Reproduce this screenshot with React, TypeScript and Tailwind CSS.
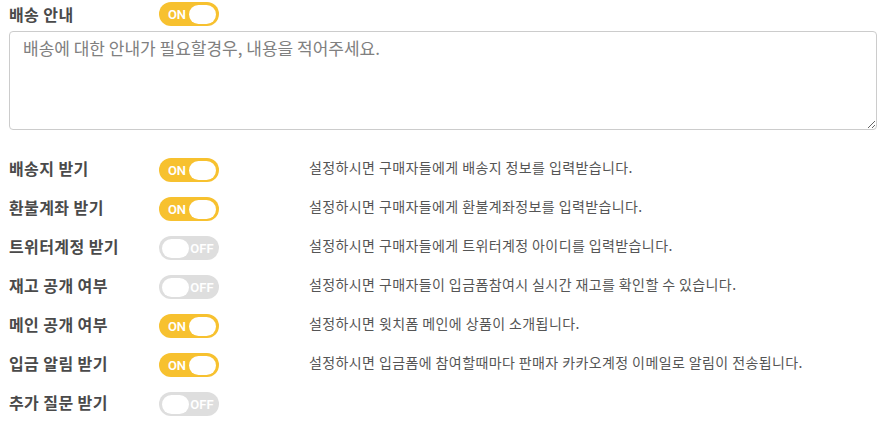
import React, { useState } from 'react'

interface Option {
  key: string
  label: string
  on: boolean
  help?: string
}

const initialOptions: Option[] = [
  { key: 'address', label: '배송지 받기', on: true, help: '설정하시면 구매자들에게 배송지 정보를 입력받습니다.' },
  { key: 'refund', label: '환불계좌 받기', on: true, help: '설정하시면 구매자들에게 환불계좌정보를 입력받습니다.' },
  { key: 'twitter', label: '트위터계정 받기', on: false, help: '설정하시면 구매자들에게 트위터계정 아이디를 입력받습니다.' },
  { key: 'stock', label: '재고 공개 여부', on: false, help: '설정하시면 구매자들이 입금폼참여시 실시간 재고를 확인할 수 있습니다.' },
  { key: 'main', label: '메인 공개 여부', on: true, help: '설정하시면 윗치폼 메인에 상품이 소개됩니다.' },
  { key: 'notify', label: '입금 알림 받기', on: true, help: '설정하시면 입금폼에 참여할때마다 판매자 카카오계정 이메일로 알림이 전송됩니다.' },
  { key: 'question', label: '추가 질문 받기', on: false },
]

function Toggle({ on, onChange, className = '' }: { on: boolean; onChange: () => void; className?: string }) {
  return (
    <button
      type="button"
      onClick={onChange}
      className={`flex items-center w-[60px] h-[24px] rounded-full px-[3px] shrink-0 ${
        on ? 'bg-[#f7c12f] flex-row' : 'bg-[#dedede] flex-row-reverse'
      } ${className}`}
    >
      <span
        className={`flex-1 text-center text-[13px] font-semibold text-white leading-none ${on ? 'pl-[3px]' : 'pr-[1px]'}`}
        style={{ fontFamily: 'Roboto, "Liberation Sans", sans-serif' }}
      >
        {on ? 'ON' : 'OFF'}
      </span>
      <span className="w-[27px] h-[19px] rounded-full bg-white" />
    </button>
  )
}

export default function App() {
  const [shipInfo, setShipInfo] = useState(true)
  const [options, setOptions] = useState(initialOptions)

  const flip = (key: string) =>
    setOptions((prev) => prev.map((o) => (o.key === key ? { ...o, on: !o.on } : o)))

  return (
    <div
      className="w-[885px] h-[422px] bg-white pl-[9px] pr-[8px] overflow-hidden"
      style={{ fontFamily: '"Noto Sans CJK KR", "Noto Sans", sans-serif' }}
    >
      <div className="flex items-center h-[28px]">
        <div className="w-[150px] text-[16px] tracking-[0.4px] font-bold text-[#4a4a4a]">배송 안내</div>
        <Toggle on={shipInfo} onChange={() => setShipInfo(!shipInfo)} />
      </div>

      <textarea
        className="block w-[868px] h-[99px] mt-[3px] border border-[#ccc] rounded-[4px] px-[13px] py-[3px] text-[17px] text-[#555] placeholder:text-[#808080] outline-none"
        placeholder="배송에 대한 안내가 필요할경우, 내용을 적어주세요."
      />

      <div className="mt-[18px] flex flex-col">
        {options.map((o) => (
          <div key={o.key} className="flex items-center h-[39px]">
            <div className="w-[150px] text-[16px] tracking-[0.4px] font-bold text-[#4a4a4a]">{o.label}</div>
            <Toggle on={o.on} onChange={() => flip(o.key)} className="mt-[5px]" />
            {o.help && <div className="ml-[90px] text-[14px] tracking-[0.4px] text-[#555]">{o.help}</div>}
          </div>
        ))}
      </div>
    </div>
  )
}
